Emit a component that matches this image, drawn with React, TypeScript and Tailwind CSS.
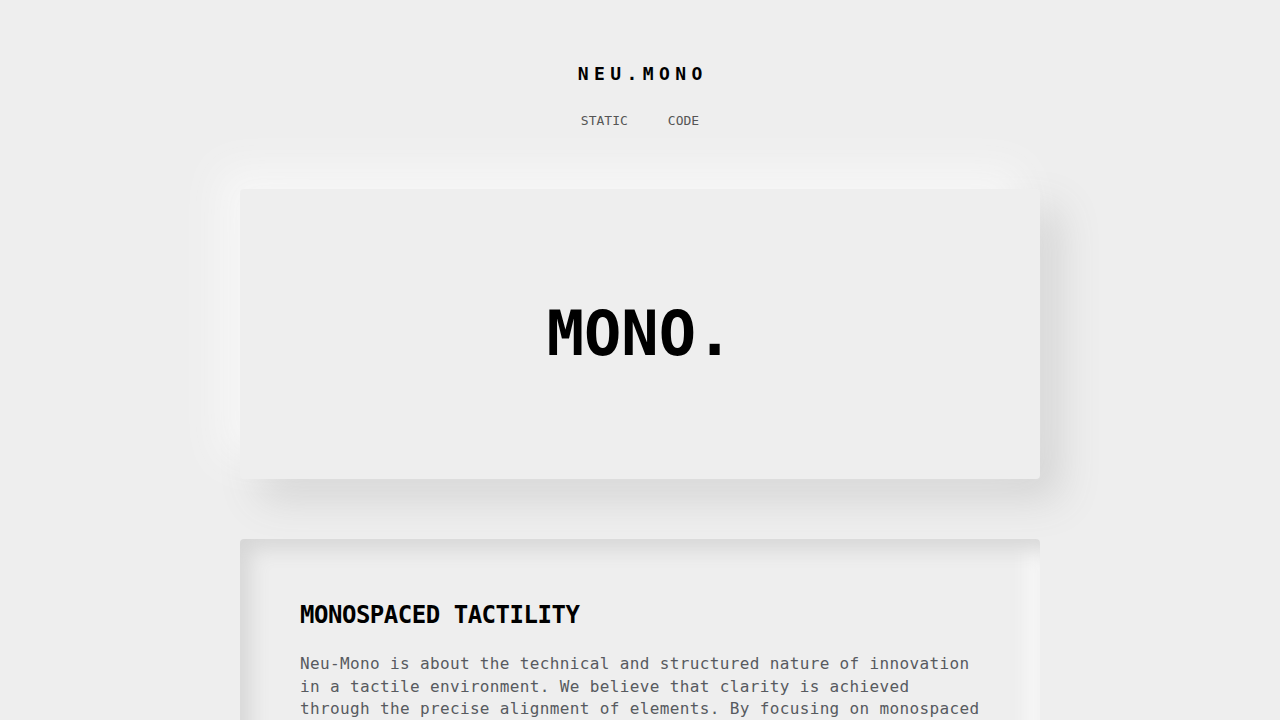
import React from 'react';

const mono = "font-['DejaVu_Sans_Mono','Liberation_Mono',monospace]";

export default function App() {
  return (
    <div className={`min-h-screen bg-[#eeeeee] text-black ${mono}`}>
      <div className="flex flex-col items-center pt-[60px] pb-20">
        {/* Header */}
        <header className="flex flex-col items-center">
          <h1 className="text-[18px] leading-[27px] font-bold tracking-[0.3em] pl-[0.3em]">NEU.MONO</h1>
          <nav className="mt-[24px] flex gap-[40px] text-[13px] leading-[20px] text-[#555555]">
            <a href="#">STATIC</a>
            <a href="#">CODE</a>
          </nav>
        </header>

        {/* Hero card */}
        <section className="mt-[58px] w-[800px] h-[290px] rounded-[4px] bg-[#eeeeee] shadow-[-20px_-20px_40px_#f7f7f7,20px_20px_40px_#d4d4d4] flex items-center justify-center">
          <h2 className="text-[62px] leading-none font-bold">MONO.</h2>
        </section>

        {/* Pressed card */}
        <section className="mt-[60px] w-[800px] rounded-[4px] bg-[#eeeeee] shadow-[inset_10px_10px_20px_#d6d6d6,inset_-10px_-10px_20px_#fafafa] p-[60px]">
          <h3 className="text-[24px] leading-[32px] font-bold tracking-[-0.02em]">MONOSPACED TACTILITY</h3>
          <p className="mt-[22px] text-[16px] leading-[22.5px] tracking-[0.36px] text-[#575a5f]">
            Neu-Mono is about the technical and structured nature of innovation in a tactile environment. We believe that clarity is achieved through the precise alignment of elements. By focusing on monospaced typography and soft, physical depth, we create interfaces that feel engineered rather than decorated.
          </p>
        </section>
      </div>
    </div>
  );
}
